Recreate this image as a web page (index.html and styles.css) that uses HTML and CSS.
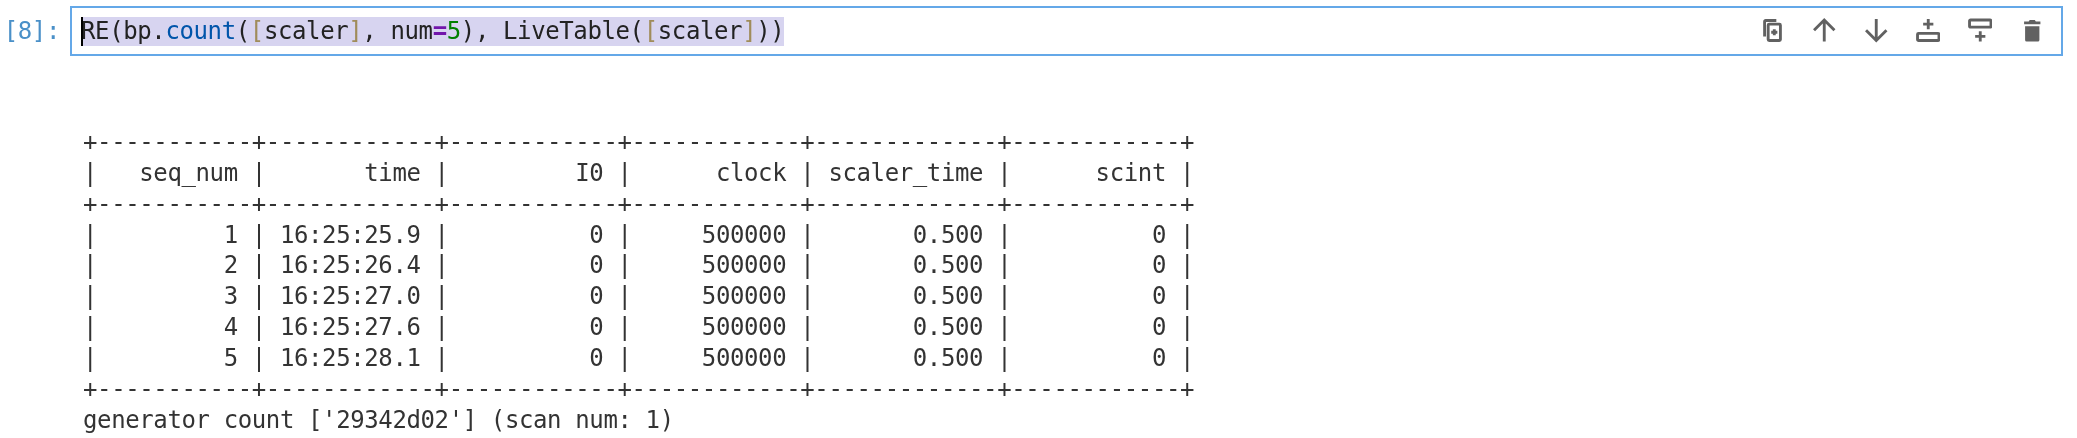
FILE: index.html
```html
<!DOCTYPE html>
<html lang="en">
<head>
<meta charset="utf-8">
<title>Notebook cell</title>
<link rel="stylesheet" href="styles.css">
</head>
<body>
<main class="notebook">
  <section class="input-row">
    <div class="prompt">[8]:</div>
    <div class="editor">
      <code class="code"><span class="cursor"></span><span class="sel">RE(bp.<span class="prop">count</span>(<span class="br">[</span>scaler<span class="br">]</span>, num<span class="op">=</span><span class="num">5</span>), LiveTable(<span class="br">[</span>scaler<span class="br">]</span>))</span></code>
      <div class="toolbar">
        <svg class="icon" viewBox="0 0 24 24"><path d="M4.500 18V3.500a1 1 0 0 1 1-1H16" class="line"/><rect x="8" y="6" width="12" height="16" rx="1" class="line"/><path d="M14 11v6M11 14h6" class="line"/></svg>
        <svg class="icon" viewBox="0 0 24 24"><path d="M12 23V2M2 12 12 2l10 10" class="line"/></svg>
        <svg class="icon" viewBox="0 0 24 24"><path d="M12 1v21M2 12l10 10 10-10" class="line"/></svg>
        <svg class="icon" viewBox="0 0 24 24"><rect x="1.500" y="15" width="21" height="7" rx="1" class="line"/><path d="M12 1v10M7 6h10" class="line"/></svg>
        <svg class="icon" viewBox="0 0 24 24"><rect x="1.500" y="2" width="21" height="7" rx="1" class="line"/><path d="M12 13v10M7 18h10" class="line"/></svg>
        <svg class="icon" viewBox="0 0 24 24"><path class="fill" d="M5 8h14v13.500a1.500 1.500 0 0 1-1.500 1.500h-11A1.500 1.500 0 0 1 5 21.500zM4 3.500h4.500L9.500 2h5l1 1.500H20V6H4z"/></svg>
      </div>
    </div>
  </section>
  <pre class="output">
+-----------+------------+------------+------------+-------------+------------+
|   seq_num |       time |         I0 |      clock | scaler_time |      scint |
+-----------+------------+------------+------------+-------------+------------+
|         1 | 16:25:25.9 |          0 |     500000 |       0.500 |          0 |
|         2 | 16:25:26.4 |          0 |     500000 |       0.500 |          0 |
|         3 | 16:25:27.0 |          0 |     500000 |       0.500 |          0 |
|         4 | 16:25:27.6 |          0 |     500000 |       0.500 |          0 |
|         5 | 16:25:28.1 |          0 |     500000 |       0.500 |          0 |
+-----------+------------+------------+------------+-------------+------------+
generator count ['29342d02'] (scan num: 1)</pre>
</main>
</body>
</html>
```
FILE: styles.css
```css
html, body {
  margin: 0;
  background: #fff;
}

body {
  height: 438px;
  overflow: hidden;
}

.notebook {
  padding: 6px 14px 0 0;
  font-family: "DejaVu Sans Mono", monospace;
  font-size: 24px;
  letter-spacing: -0.385px;
  color: #333;
  filter: blur(0.45px);
}

.input-row {
  display: flex;
  align-items: flex-start;
  gap: 10px;
}

.prompt {
  width: 60px;
  text-align: right;
  color: #4a90c8;
  line-height: 50px;
  flex: none;
}

.editor {
  flex: 1;
  position: relative;
  box-sizing: border-box;
  height: 50px;
  border: 2px solid #64a8e8;
  padding: 0 9px;
  display: flex;
  align-items: center;
}

.code {
  font: inherit;
  line-height: 29px;
  color: #222;
  white-space: pre;
  display: flex;
}

.sel {
  background: #d7d4f0;
}

.cursor {
  width: 2px;
  margin-right: -2px;
  background: #000;
  position: relative;
  z-index: 1;
}

.prop { color: #0055aa; }
.br { color: #a08c5a; }
.op { color: #7216ab; font-weight: bold; }
.num { color: #008000; }

.toolbar {
  position: absolute;
  top: 10px;
  right: 17px;
  display: flex;
  gap: 27.500px;
}

.icon {
  width: 24.500px;
  height: 24.500px;
  display: block;
}

.line {
  fill: none;
  stroke: #616161;
  stroke-width: 2.800;
}

.fill {
  fill: #616161;
}

.output {
  margin: 71px 0 0 83px;
  font: inherit;
  line-height: 30.850px;
  color: #333;
}
```
